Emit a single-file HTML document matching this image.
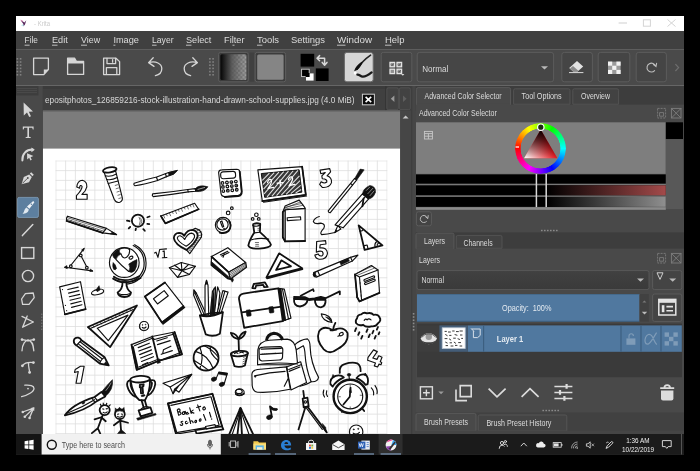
<!DOCTYPE html>
<html><head><meta charset="utf-8">
<style>
*{margin:0;padding:0}
html,body{width:700px;height:471px;background:#000;overflow:hidden}
svg{position:absolute;left:0;top:0;display:block;filter:blur(0.42px)}
text{font-family:"Liberation Sans",sans-serif;opacity:.99}
.ic{fill:none;stroke:#d6d6d6;stroke-width:1.3;stroke-linecap:round;stroke-linejoin:round}
.icf{fill:#d6d6d6;stroke:none}
.d{fill:none;stroke:#111;stroke-width:1.15;stroke-linecap:round;stroke-linejoin:round}
.dw{fill:#fff;stroke:#111;stroke-width:1.15;stroke-linecap:round;stroke-linejoin:round}
.df{fill:#111;stroke:#111;stroke-width:0.6;stroke-linejoin:round}
.dt{fill:none;stroke:#111;stroke-width:0.6;stroke-linecap:round}
.z *{vector-effect:non-scaling-stroke}
.k{stroke-width:1.8}
.h{stroke-width:0.7}
</style></head><body>
<svg width="700" height="471" viewBox="0 0 700 471">
<defs>
<pattern id="grid" x="55.4" y="160.4" width="9.74" height="9.74" patternUnits="userSpaceOnUse">
<path d="M0.5 0V9.74M0 0.5H9.74" stroke="#dcdcdc" stroke-width="0.75" fill="none"/>
</pattern>
<linearGradient id="gradbtn" x1="0" x2="1" y1="0" y2="0"><stop offset="0" stop-color="#050505"/><stop offset="0.45" stop-color="#5a5a5a"/><stop offset="1" stop-color="#8e8e8e"/></linearGradient>
<linearGradient id="redbar" x1="0" x2="1"><stop offset="0" stop-color="#000"/><stop offset="1" stop-color="#a34a4a"/></linearGradient>
<linearGradient id="graybar" x1="0" x2="1"><stop offset="0" stop-color="#000"/><stop offset="1" stop-color="#8f8f8f"/></linearGradient>
<linearGradient id="combo" x1="0" x2="0" y1="0" y2="1"><stop offset="0" stop-color="#414141"/><stop offset="1" stop-color="#3a3a3a"/></linearGradient>
<pattern id="chk" x="220.4" y="54.2" width="4.4" height="4.4" patternUnits="userSpaceOnUse"><rect width="2.2" height="2.2" fill="#fff" fill-opacity=".16"/><rect x="2.2" y="2.2" width="2.2" height="2.2" fill="#fff" fill-opacity=".16"/><rect x="2.2" width="2.2" height="2.2" fill="#000" fill-opacity=".12"/><rect y="2.2" width="2.2" height="2.2" fill="#000" fill-opacity=".12"/></pattern>
<linearGradient id="chkfade" x1="0" x2="1"><stop offset="0" stop-color="#fff" stop-opacity="0"/><stop offset="1" stop-color="#fff" stop-opacity="1"/></linearGradient><mask id="chkmask"><rect x="229" y="54.2" width="18" height="25.8" fill="url(#chkfade)"/></mask>
<clipPath id="paperclip"><rect x="42.8" y="148.6" width="357.4" height="285.4"/></clipPath>
</defs>
<!-- window base -->
<rect x="16" y="16" width="668" height="438.5" fill="#494949"/>
<!-- title bar -->
<rect x="16" y="16" width="668" height="15" fill="#fff"/>
<g id="kritaicon"><path d="M20.5 20 L24.5 22.5 L26.3 20.2 L25 24.5 L23.6 26.2 L23.2 23.8 Z" fill="#5a2a5e"/><path d="M20.3 19.6 L23 20.4 L22 22 Z" fill="#e06aa8" opacity=".6"/><path d="M21 25.5 L23.4 24 L23.6 26.4 Z" fill="#7fd6e6" opacity=".5"/></g>
<text x="34" y="26" font-size="7.5" fill="#c9c9c9" textLength="16" lengthAdjust="spacingAndGlyphs">- Krita</text>
<path d="M618.6 23H627" stroke="#cfcfcf" stroke-width="1" />
<rect x="643.4" y="19.8" width="7" height="6.4" fill="none" stroke="#d4d4d4" stroke-width="1"/>
<path d="M667.5 19.5L675.5 26.5M675.5 19.5L667.5 26.5" stroke="#d4d4d4" stroke-width="1"/>
<!-- menu bar -->
<rect x="16" y="31" width="668" height="18.3" fill="#404040"/>
<rect x="16" y="49" width="668" height="1" fill="#5d5d5d"/>
<g font-size="9.4" fill="#dedede">
<text x="24.6" y="43.2" textLength="13.4" lengthAdjust="spacingAndGlyphs">File</text>
<text x="52" y="43.2" textLength="15.7" lengthAdjust="spacingAndGlyphs">Edit</text>
<text x="81" y="43.2" textLength="19.2" lengthAdjust="spacingAndGlyphs">View</text>
<text x="113.4" y="43.2" textLength="25.6" lengthAdjust="spacingAndGlyphs">Image</text>
<text x="152" y="43.2" textLength="21.6" lengthAdjust="spacingAndGlyphs">Layer</text>
<text x="186" y="43.2" textLength="25.4" lengthAdjust="spacingAndGlyphs">Select</text>
<text x="224" y="43.2" textLength="20.5" lengthAdjust="spacingAndGlyphs">Filter</text>
<text x="257" y="43.2" textLength="22" lengthAdjust="spacingAndGlyphs">Tools</text>
<text x="291" y="43.2" textLength="34" lengthAdjust="spacingAndGlyphs">Settings</text>
<text x="337" y="43.2" textLength="35" lengthAdjust="spacingAndGlyphs">Window</text>
<text x="385" y="43.2" textLength="19.5" lengthAdjust="spacingAndGlyphs">Help</text>
</g>
<g stroke="#dedede" stroke-width="0.8">
<path d="M24.6 45.2h5M52 45.2h5.5M81 45.2h6M113.4 45.2h2M152 45.2h4.6M186 45.2h5.5M232.5 45.2h2M257 45.2h5.4M312 45.2h5M337 45.2h8.5M385 45.2h6.5"/>
</g>
<!-- toolbar -->
<rect x="16" y="50" width="668" height="35.3" fill="#4a4a4a"/>
<rect x="16" y="85" width="668" height="1" fill="#666"/>
<!-- toolbar handles -->
<g fill="#808080">
<g id="hd1"><rect x="16.6" y="58" width="1.6" height="1.6"/><rect x="19.8" y="58" width="1.6" height="1.6"/><rect x="16.6" y="61.2" width="1.6" height="1.6"/><rect x="19.8" y="61.2" width="1.6" height="1.6"/><rect x="16.6" y="64.4" width="1.6" height="1.6"/><rect x="19.8" y="64.4" width="1.6" height="1.6"/><rect x="16.6" y="67.6" width="1.6" height="1.6"/><rect x="19.8" y="67.6" width="1.6" height="1.6"/><rect x="16.6" y="70.8" width="1.6" height="1.6"/><rect x="19.8" y="70.8" width="1.6" height="1.6"/><rect x="16.6" y="74" width="1.6" height="1.6"/><rect x="19.8" y="74" width="1.6" height="1.6"/></g>
<use href="#hd1" x="192.5"/>
</g>
<!-- new doc -->
<path class="ic" d="M33.6 58.2H48.4V69.5L43.8 74.6H33.6Z"/><path class="icf" d="M48.4 69.5L43.8 74.6V69.5Z"/>
<!-- open folder -->
<path class="ic" d="M67.6 74.4V58.2H74.5L76.4 61.4H83.6V74.4Z"/><path class="icf" d="M67.6 58.2H74.5L76.4 61.4H83.6V63.6H67.6Z"/>
<!-- save -->
<path class="ic" d="M103.6 58.2H116L119.6 61.6V74.6H103.6Z"/><path class="ic" d="M107 58.4V63.6H115.6V58.4M112.6 59.6V62.2M106.4 74.4V67.6H116.8V74.4" stroke-width="1.1"/>
<!-- undo -->
<path class="ic" d="M148.6 62.6C156 60.6 161.8 63.6 161.8 68.6C161.8 72.6 158.8 75 155.4 75.6M153.2 57.8L148.6 62.6L154 66.4"/>
<!-- redo -->
<path class="ic" d="M197.4 62.6C190 60.6 184.2 63.6 184.2 68.6C184.2 72.6 187.2 75 190.6 75.6M192.8 57.8L197.4 62.6L192 66.4"/>
<!-- gradient button -->
<rect x="218.6" y="52.4" width="29.6" height="29.4" rx="2" fill="#3c3c3c" stroke="#5e5e5e" stroke-width="1"/>
<rect x="220.4" y="54.2" width="26" height="25.8" rx="1.5" fill="url(#gradbtn)"/>
<rect x="229" y="54.2" width="17.4" height="25.8" fill="url(#chk)" mask="url(#chkmask)"/>
<rect id="gapband" x="249.4" y="52.6" width="4.8" height="29" fill="#404040"/>
<!-- pattern button -->
<rect x="255.2" y="52.4" width="30.4" height="29.4" rx="2" fill="#3c3c3c" stroke="#5e5e5e" stroke-width="1"/>
<rect x="257.2" y="54.4" width="26.4" height="25.4" rx="1.5" fill="#858585"/>
<!-- fg/bg -->
<rect x="300.6" y="53.8" width="13.6" height="12.8" fill="#000"/>
<rect x="315.8" y="68.4" width="12.8" height="12.6" fill="#000"/>
<rect x="301.6" y="69.2" width="7.6" height="7.4" fill="#000" stroke="#cfcfcf" stroke-width="0.9"/>
<rect x="306" y="73.4" width="7.6" height="7.2" fill="#fff"/>
<rect x="305.6" y="73" width="4" height="4" fill="#000"/>
<path d="M317.4 58.2H324.6M319.6 55.6L317 58.2L319.6 60.8M324.6 58.2V64.6M322.2 62.4L324.6 65.2L327 62.4" fill="none" stroke="#d8d8d8" stroke-width="1.5" stroke-linejoin="round" stroke-linecap="round"/>
<!-- brush preset -->
<rect x="344.4" y="52.4" width="28.8" height="29.4" rx="2.5" fill="#d6d6d6" stroke="#6a6a6a" stroke-width="1"/>
<path d="M370.6 55.2C366 58.4 361 63 357 69.2" fill="none" stroke="#222" stroke-width="1.6" stroke-linecap="round"/>
<path d="M362 62.4C359 64.6 356 67.6 355.2 70.2C356.6 69.8 359.6 67.2 362 62.4Z" fill="#111" stroke="#111" stroke-width="1.4"/>
<circle cx="355.2" cy="73" r="1.5" fill="#fff"/><path d="M357.4 74.6C359.4 74.4 360.4 76.4 362.6 76.6C365.6 76.8 368.4 75 371.6 72.4" fill="none" stroke="#1a1a1a" stroke-width="2.3" stroke-linecap="round"/>
<!-- separator & grid btn -->
<rect x="381.2" y="52.4" width="30.6" height="29.4" rx="2" fill="#454545" stroke="#5c5c5c" stroke-width="1"/>
<g fill="#dcdcdc" fill-opacity=".5" stroke="#e4e4e4" stroke-width="1.3"><rect x="390" y="62.4" width="4.6" height="4.4"/><rect x="397" y="62.4" width="4.6" height="4.4"/><rect x="390" y="69.2" width="4.6" height="4.4"/><rect x="397" y="69.2" width="4.6" height="4.4"/></g>
<path d="M391 64.6l1 1l1.600-2M398 64.6l1 1l1.600-2M398 71.400l1 1l1.600-2" fill="none" stroke="#333" stroke-width=".7"/>
<path d="M401.200 74h3.200l-1.600 1.800z" fill="#dcdcdc"/>
<!-- Normal combobox -->
<rect x="417.2" y="52.4" width="136.4" height="29.4" rx="2.5" fill="#464646" stroke="#5c5c5c" stroke-width="1"/>
<text x="422.2" y="72" font-size="8.6" fill="#dcdcdc" textLength="26" lengthAdjust="spacingAndGlyphs">Normal</text>
<path d="M541 66.2h7l-3.5 3.4z" fill="#b9b9b9"/>
<!-- eraser btn -->
<rect x="561.8" y="52.4" width="30.6" height="29.4" rx="2.5" fill="#454545" stroke="#5c5c5c" stroke-width="1"/>
<path d="M577 61L583.2 66.6L577.4 71.8H573.4L569.2 68Z" fill="#e2e2e2"/><path d="M570 68.6L573.4 71.8H577.4L578.4 70.8L573 66Z" fill="#8a8a8a"/><path d="M569 72.6H583.4" stroke="#dcdcdc" stroke-width="1"/>
<!-- checker btn -->
<rect x="598.2" y="52.4" width="31.6" height="29.4" rx="2.5" fill="#454545" stroke="#5c5c5c" stroke-width="1"/>
<g><rect x="608" y="61.6" width="12.6" height="12.4" fill="#9a9a9a"/><g fill="#f2f2f2"><rect x="608" y="61.6" width="4.2" height="4.1"/><rect x="616.4" y="61.6" width="4.2" height="4.1"/><rect x="612.2" y="65.7" width="4.2" height="4.2"/><rect x="608" y="69.9" width="4.2" height="4.1"/><rect x="616.4" y="69.9" width="4.2" height="4.1"/></g></g>
<!-- reload btn -->
<rect x="636.2" y="52.4" width="30.2" height="29.4" rx="2.5" fill="#454545" stroke="#5c5c5c" stroke-width="1"/>
<path d="M655.6 66.2A4.4 4.4 0 1 0 654.6 70.6M653.4 64.6L656 66.6L656.6 63.4" fill="none" stroke="#bdbdbd" stroke-width="1.1" stroke-linecap="round"/>
<path d="M675.4 64.2L678.6 67.6L675.4 71" fill="none" stroke="#6e6e6e" stroke-width="1.2"/>
<!-- tab row -->
<rect x="16" y="86" width="400" height="24.6" fill="#3b3b3b"/>
<rect x="42.8" y="89" width="342.6" height="21.6" fill="#404040"/>
<rect x="385.4" y="86" width="1" height="24.6" fill="#333"/>
<text x="45" y="102.6" font-size="8.6" fill="#dadada" textLength="309.6" lengthAdjust="spacingAndGlyphs">epositphotos_126859216-stock-illustration-hand-drawn-school-supplies.jpg (4.0 MiB)</text>
<rect x="362.4" y="94.2" width="12" height="10.6" fill="#0c0c0c" stroke="#cfcfcf" stroke-width="1"/>
<path d="M365.6 96.8L371.2 102.2M371.2 96.8L365.6 102.2" stroke="#fff" stroke-width="1.6"/>
<!-- tab scroll arrows -->
<rect x="386.8" y="87.8" width="11.6" height="21.8" rx="1.5" fill="#424242" stroke="#565656" stroke-width="0.8"/>
<rect x="399.4" y="87.8" width="11" height="21.8" rx="1.5" fill="#424242" stroke="#565656" stroke-width="0.8"/>
<path d="M394.4 95.6V102L390.8 98.8Z" fill="#9a9a9a"/><path d="M403 95.6V102L406.6 98.8Z" fill="#5f5f5f"/>
<!-- canvas area -->
<rect x="42.8" y="110.6" width="357.4" height="324" fill="#7c7c7c"/>
<rect x="42.8" y="110.6" width="357.4" height="1.2" fill="#6a6a6a"/>
<rect x="42.8" y="148.6" width="357.4" height="286" fill="#fff"/>
<rect x="55.4" y="160.4" width="332" height="274" fill="url(#grid)" clip-path="url(#paperclip)"/>
<!-- scrollbar / splitter -->
<rect x="400.2" y="110.6" width="10.6" height="324" fill="#464646"/>
<rect x="410.8" y="86" width="5" height="348.6" fill="#464646"/>
<rect x="411.4" y="86" width="0.8" height="348.6" fill="#3a3a3a"/>
<path d="M402.6 118.4h6l-3-3z" fill="#c8c8c8"/>
<g fill="#8c8c8c"><rect x="412.8" y="313" width="1.6" height="1.6"/><rect x="412.8" y="316.2" width="1.6" height="1.6"/><rect x="412.8" y="319.4" width="1.6" height="1.6"/><rect x="412.8" y="322.6" width="1.6" height="1.6"/><rect x="412.8" y="325.8" width="1.6" height="1.6"/><rect x="412.8" y="329" width="1.6" height="1.6"/></g>
<g clip-path="url(#paperclip)">
<!-- digits as paths -->
<g class="z" transform="translate(50,155) scale(0.14859)"><path class="dw" stroke-width="1.4" d="M180 215Q185 172 218 170Q250 178 248 215Q240 245 215 266L250 264L250 298L178 298L178 274Q215 235 216 214Q212 202 204 206Q198 212 200 224Z"/></g>
<g class="z" transform="translate(300,155) scale(0.14859)"><path class="dw" stroke-width="1.4" d="M135 102L200 92L206 114L182 140Q215 150 212 186Q198 222 150 218L132 198L142 180Q165 196 180 182Q186 162 150 160L147 140L170 118L140 126Z"/></g>
<g class="z" transform="translate(300,215) scale(0.14859)"><path class="dw" stroke-width="1.4" d="M112 178L172 172L175 195L136 200L133 222Q180 215 185 256Q180 300 130 298Q105 294 100 270L122 262Q130 280 148 275Q162 262 150 246Q135 238 110 250Z"/></g>
<g class="z" transform="translate(50,335) scale(0.14859)"><path class="dw" stroke-width="1.4" d="M205 210L230 210L208 325L175 325L190 246L165 252L170 232Z"/></g>
<g class="z" transform="translate(300,335) scale(0.14859)"><path class="dw" stroke-width="1.4" d="M495 100L520 112L490 155L518 164L530 140L552 150L540 180L550 185L545 200L532 196L522 215L500 208L508 188L455 170L458 150Z"/></g>
<!-- Tile A origin 50,155 -->
<g class="z" transform="translate(50,155) scale(0.14859)">
<path class="dw" d="M362 112L432 298Q445 325 470 318Q492 308 486 285L442 108Z"/>
<ellipse class="dw k" cx="402" cy="100" rx="46" ry="17" transform="rotate(-10 402 100)"/>
<path class="d" d="M372 140Q405 150 447 128M383 165Q415 172 452 152M392 192L458 175"/>
<path class="dt" d="M455 200l-16 5M461 222l-16 5M467 244l-16 5M473 266l-16 5M479 288l-16 5"/>
</g>
<!-- Tile B origin 130,155 -->
<g class="z" transform="translate(130,155) scale(0.14859)">
<path class="dw" d="M28 190Q100 165 180 148L260 118L318 104L290 130L250 144L185 172Q100 198 34 207Q22 200 28 190Z"/>
<path class="df" d="M258 118L318 104L290 130L262 138Z"/>
<path class="d" d="M178 150L186 172M238 126L246 146"/>
<path class="dw" d="M152 262Q270 250 390 232L440 226L442 244L392 248Q270 268 156 280Q146 272 152 262Z"/>
<path class="df" d="M438 228Q465 196 525 214Q498 252 442 246Z"/>
<path class="d" d="M388 232L392 248"/>
<path d="M455 232L505 218" stroke="#fff" stroke-width=".6" fill="none"/>
<path class="dw" d="M208 410L435 325L462 365L238 460Z"/>
<path class="d k" d="M208 410L238 460L462 365"/>
<path class="dt" d="M225 404l8 20M245 397l5 12M265 389l8 20M285 382l5 12M305 374l8 20M325 367l5 12M345 359l8 20M365 352l5 12M385 344l8 20M405 337l5 12M422 330l8 20"/>
</g>
<!-- Tile C origin 210,155 -->
<g class="z" transform="translate(210,155) scale(0.14859)">
<path class="dw" d="M58 118Q60 100 80 100L180 96Q198 96 200 112L212 245Q212 268 190 272L100 280Q78 280 74 258Z"/>
<path class="d k" d="M200 112L214 245Q214 272 190 276L100 284"/>
<rect class="dw" x="72" y="112" width="100" height="46" rx="16" transform="rotate(-3 120 135)"/>
<g class="dw" stroke-width=".8"><circle cx="84" cy="188" r="9"/><circle cx="114" cy="185" r="9"/><circle cx="144" cy="182" r="9"/><circle cx="174" cy="179" r="9"/><circle cx="87" cy="215" r="9"/><circle cx="117" cy="212" r="9"/><circle cx="147" cy="209" r="9"/><circle cx="177" cy="206" r="9"/><circle cx="90" cy="243" r="9"/><circle cx="120" cy="240" r="9"/><circle cx="150" cy="237" r="9"/><circle cx="180" cy="234" r="9"/></g>
<g fill="#111"><circle cx="144" cy="182" r="4"/><circle cx="147" cy="209" r="4"/><circle cx="177" cy="206" r="4"/><circle cx="120" cy="240" r="4"/><circle cx="87" cy="215" r="4"/><circle cx="180" cy="234" r="4"/></g>
<!-- chalkboard -->
<path class="dw" d="M322 100L620 78L645 268L352 310Z"/>
<path class="d k" d="M352 310L645 268L620 78"/><path class="d" d="M360 318L650 276"/>
<path d="M345 125L600 100L618 250L368 285Z" fill="#383838" stroke="#111" stroke-width="1"/>
<g stroke="#fff" stroke-width="1.05" fill="none" opacity=".85"><path d="M352 170L400 122M356 200L432 118M360 230L464 115M364 262L496 112M384 282L528 109M416 278L560 106M448 274L592 104M480 270L602 140M512 265L606 172M544 260L610 204M576 256L614 232"/></g>
<g stroke="#fff" stroke-width="1.3" fill="none" stroke-linecap="round"><path d="M388 185Q392 160 410 165Q424 176 392 225L428 218"/><path d="M452 190L492 186M472 170L474 208"/><path d="M528 165Q534 142 552 148Q566 160 534 205L572 198"/></g>
<!-- bubbles -->
<circle class="dw" cx="147" cy="358" r="9"/><circle class="dw" cx="122" cy="390" r="12"/>
<circle class="dw" cx="312" cy="402" r="12"/><circle class="dw" cx="287" cy="430" r="9"/><circle class="dw" cx="328" cy="430" r="9"/>
</g>
<!-- Tile D origin 300,155 -->
<g class="z" transform="translate(300,155) scale(0.14859)">
<path class="dw" d="M190 376L368 158L382 168L204 388Q192 390 190 376Z"/>
<path class="df" d="M368 158L405 95L432 100L382 168Z"/>
<path class="d" d="M340 192L354 202"/>
<path class="dw" d="M236 470L420 262L462 296L290 490Z"/>
<path class="d" d="M265 470L440 280"/>
<path class="df" d="M420 262Q425 225 470 205Q510 210 508 250Q495 290 462 296Z"/>
<g stroke="#fff" stroke-width=".5" fill="none"><path d="M445 240L470 215M455 262L492 222M470 275L500 240"/></g>
<path class="d k" d="M428 292L420 345"/>
</g>
<!-- Tile E origin 50,215 -->
<g class="z" transform="translate(50,215) scale(0.14859)">
<path class="dw" d="M118 8L380 90L448 132L355 120L112 40Q106 22 118 8Z"/>
<path class="d k" d="M112 40L355 120"/>
<path class="d" d="M380 90L355 120"/><path class="dt" d="M116 18L372 98M114 29L362 109"/>
<path class="df" d="M420 115L448 132L405 127Z"/>
<path class="dt" d="M140 44l3-7M170 54l3-7M200 64l3-7M230 74l3-7M260 84l3-7M290 94l3-7M320 104l3-7"/>
<!-- sun -->
<circle class="dw k" cx="592" cy="38" r="41"/>
<path class="dt" d="M610 20Q628 40 612 62M600 15Q616 38 602 66"/>
<path class="d k" d="M518 38L535 42M530 90L540 80M576 102L578 92M628 95L638 106M655 60L668 62M655 15L670 10"/>
<!-- geometry triangle -->
<path class="d" d="M228 228L135 345M205 268L252 358M100 352L285 376"/>
<path class="df" d="M232 222L224 244L212 236ZM96 352L114 340L116 362ZM290 378L268 380L272 364Z"/>
<circle class="dw" cx="207" cy="272" r="9"/><circle class="dw" cx="140" cy="345" r="9"/><circle class="dw" cx="248" cy="355" r="9"/>
<!-- globe -->
<circle class="dw" cx="500" cy="320" r="100"/>
<path class="d" d="M560 205Q650 250 630 360Q600 450 500 455Q450 450 425 425"/>
<path class="d" d="M570 200Q665 250 642 365Q608 462 500 466"/>
<path class="df" d="M420 268Q440 235 470 228Q460 250 478 262Q450 275 445 300Q425 290 420 268ZM425 320Q440 330 448 360Q440 375 428 365Q418 345 425 320ZM530 330Q560 310 585 300Q590 340 570 375Q550 395 530 380Q545 355 530 330Z"/>
<path class="d" d="M470 228Q510 215 535 232Q540 262 515 285Q490 300 478 262M445 300Q480 340 530 380"/>
<ellipse class="dw" cx="545" cy="287" rx="14" ry="9" transform="rotate(-25 545 287)"/>
<path class="d k" d="M498 455L500 470"/>
</g>
</g>
<g clip-path="url(#paperclip)">
<!-- Tile F origin 130,215 -->
<g class="z" transform="translate(130,215) scale(0.14859)">
<!-- heart -->
<path class="dw" d="M380 235L402 260L480 150Q492 104 440 90L420 100Z"/>
<path class="dt" d="M390 244l20-8M400 230l22-8M410 216l24-8M420 202l26-8M430 188l28-8M440 174l30-8M450 158l30-8M456 140l28-6M456 122l26-8M450 106l20-8"/>
<path class="dw k" d="M380 235Q300 195 295 155Q298 122 330 120Q355 122 365 140Q385 100 420 100Q458 108 455 145Q440 190 380 235Z"/>
<path class="d" d="M378 210Q322 180 318 155Q322 138 338 140Q355 145 368 165Q385 125 415 122Q438 128 434 150Q420 185 378 210Z"/>
<!-- sqrt 1 -->
<path class="d" d="M165 255L175 250L188 285L200 232L245 228M222 245L230 242L232 285M218 288L248 286"/>
<!-- boat -->
<path class="dw" d="M265 355L345 320L440 345L400 400L320 420Z"/>
<path class="d" d="M265 355L350 375L440 345M345 320L350 375M320 420L350 375L400 400M300 338L350 375L395 332"/>
<!-- lying book (top part) -->
</g>
<!-- Tile G origin 210,215 -->
<g class="z" transform="translate(210,215) scale(0.14859)">
<!-- coin -->
<circle class="dw" cx="88" cy="68" r="52"/>
<path class="d k" d="M128 40Q150 75 125 108Q100 128 65 118"/>
<circle class="d" cx="84" cy="64" r="38"/>
<path class="dw" d="M70 45L80 40L92 78L84 82Z"/><circle class="df" cx="95" cy="92" r="4"/>
<!-- flask -->
<path class="dw k" d="M290 62Q312 50 338 60L336 115Q400 170 410 200Q405 222 330 226Q265 228 258 205Q265 170 298 118Z"/>
<path class="d" d="M288 70Q312 82 338 68M275 168Q330 150 395 162M300 120L334 116"/>
<path class="dt" d="M305 185h22M308 198h18M306 210h22M322 90h10M322 102h10"/>
<!-- upright book -->
<path class="dw" d="M505 -35L640 -45L640 175L505 178Z"/>
<path class="dw" d="M490 -20L505 -35L505 178L490 150Z"/>
<path class="d k" d="M505 178L640 175M490 -20L490 150L505 178"/>
<rect class="dw" x="520" y="15" width="90" height="20" transform="rotate(-4 565 25)"/>
<path class="dw" d="M490 -20L505 -60L600 -100L635 -55L640 -45L505 -35Z"/>
<path class="dt" d="M500 -45L610 -88M505 -52L618 -78M508 -40L628 -66"/>
<!-- lying book -->
<path class="dw" d="M10 280L120 220L240 320L125 385Z"/>
<path class="dw" d="M125 385L240 320L246 352L136 432Z"/>
<path class="dw" d="M10 280L125 385L136 432L118 428L8 338Z"/><path class="df" d="M8 312L122 412L136 432L118 428L8 338Z"/>
<path class="dt" d="M128 396L242 328M130 406L243 336M132 416L244 344M134 424L245 350"/>
<path class="d" d="M70 268l50-24M78 276l50-24M96 262l-8 22"/>
<path class="df" d="M136 430l14 22l8-14l-6-16z"/>
<path class="d k" d="M10 280L125 385"/>
<!-- set square -->
<path class="dw k" d="M465 258L620 358L380 420Z"/>
<path class="dw k" d="M480 305L545 345L445 370Z"/>
<path class="d k" d="M384 426L622 364"/>
</g>
<!-- Tile H origin 300,215 -->
<g class="z" transform="translate(300,215) scale(0.14859)">
<path class="d" d="M130 10Q95 20 90 45Q100 65 140 55Q175 60 160 90Q130 120 145 132Q180 130 235 118"/>
<path class="dw" d="M235 118L255 70L275 95Z"/><path class="df" d="M235 118L243 98L250 108Z"/>
<!-- right triangle -->
<path class="dw k" d="M395 70L435 235L555 205Z"/>
<path class="d" d="M428 208L452 202L458 228M402 108Q418 112 425 98M505 215Q500 192 515 180M520 212Q516 196 528 188"/>
<!-- ballpoint pen -->
<path class="dw" d="M92 388L340 285L390 270L352 310L110 418Q85 415 92 388Z"/>
<path class="df" d="M92 388Q82 404 98 418L112 412Q100 400 106 384Z"/>
<path class="df" d="M268 316L325 292L332 310L276 336Z"/>
<path class="d" d="M340 285L352 310M120 378L132 406"/>
</g>
<!-- Tile I origin 50,275 -->
<g class="z" transform="translate(50,275) scale(0.14859)">
<path class="dw" d="M65 80L205 45L240 230L100 265Z"/><path class="d k" d="M240 230L100 265"/>
<path class="d" stroke-width="1" d="M120 98L190 82M125 122L195 105M130 146L200 130M135 170L205 153M140 194L210 177M145 218L215 200"/>
<g fill="#111"><circle cx="84" cy="98" r="4"/><circle cx="104" cy="205" r="4"/><circle cx="112" cy="240" r="4"/></g>
<!-- pushpin -->
<ellipse class="dw" cx="320" cy="115" rx="42" ry="17" transform="rotate(-14 320 115)"/>
<path class="df" d="M330 72L338 100L318 112L310 100Z"/>
<!-- globe stand -->
<path class="dw k" d="M488 48Q490 95 455 118Q460 145 500 148Q542 145 545 118Q512 95 514 48Z"/>
<path class="d" d="M462 126Q500 140 540 124"/>
<path class="d k" d="M430 12Q500 60 600 8M425 25Q500 75 610 20"/>
<!-- big triangle -->
<path class="dw k" d="M255 350L585 205L405 485Z"/>
<path class="dw" d="M318 358L525 270L392 442Z"/>
<path class="d" d="M275 358L560 232"/>
<path class="dt" d="M290 340l6 12M315 329l6 12M340 318l6 12M365 307l6 12M390 296l6 12M415 285l6 12M440 274l6 12M465 263l6 12M490 252l6 12M515 241l6 12M540 230l6 12"/>
<!-- smiley -->
<circle class="dw" cx="632" cy="345" r="30"/><circle class="df" cx="622" cy="338" r="3"/><circle class="df" cx="642" cy="336" r="3"/><path class="d" d="M620 355Q632 365 645 352"/>
</g>
<!-- Tile J origin 130,275 -->
<g class="z" transform="translate(130,275) scale(0.14859)">
<path class="dw" d="M100 145L235 50L360 210L215 320Z"/>
<path class="d k" d="M215 320L360 210M100 145L235 50M100 145L215 320M222 328L366 218"/>
<path class="dw" d="M158 160L230 105L258 140L185 195Z"/>
<circle class="dw" cx="95" cy="343" r="30"/><circle class="df" cx="85" cy="336" r="3"/><circle class="df" cx="105" cy="334" r="3"/><path class="d" d="M83 353Q95 363 108 350"/>
<!-- pencil cup -->
<path class="dw" d="M430 100L445 120L515 268L485 272L428 135Z"/>
<path class="d" d="M440 128L500 270"/>
<path class="dw" d="M515 35L525 70L530 268L505 268L505 72Z"/>
<path class="dw" d="M555 110L575 80L580 265L540 268Z"/><path class="df" d="M548 180L566 90L572 260L545 266Z"/>
<path class="dw" d="M590 80L605 120L590 262L568 262Z"/>
<path class="dw" d="M625 105L660 115L612 258L585 262Z"/><path class="d" d="M638 110L598 258"/>
<path class="df" d="M430 100L446 122L434 128ZM515 35L523 62L508 62Z"/>
<path class="dw k" d="M470 272Q540 290 625 250L605 395Q560 420 510 400Z"/>
<path class="d" d="M470 272Q550 250 625 250"/>
</g>
<!-- Tile K origin 210,275 -->
<g class="z" transform="translate(210,275) scale(0.14859)">
<path class="dw" d="M460 90L500 95L545 290L490 310Z"/>
<path class="df" d="M460 92L478 92L510 304L490 310Z"/>
<path class="d" d="M488 96L528 296M474 94L506 305"/>
<path class="dw k" d="M195 160Q195 130 225 125L460 90L490 310L230 355Z"/>
<path class="d k" d="M215 252L470 215"/>
<rect class="df" x="245" y="235" width="30" height="42" rx="5" transform="rotate(-8 260 256)"/><rect class="df" x="398" y="213" width="30" height="42" rx="5" transform="rotate(-8 413 234)"/>
<path class="dw k" d="M285 88L295 60L370 50L388 80L365 82L358 66L310 72L305 90Z"/>
<!-- plant sprout top (tile O has pot) -->
</g>
<!-- Tile L origin 300,275 -->
<g class="z" transform="translate(300,275) scale(0.14859)">
<!-- glasses -->
<path class="dw k" d="M-40 160Q-45 210 0 212Q45 205 52 165Z"/>
<path class="dw k" d="M100 165Q100 215 140 218Q175 210 172 168Z"/>
<path d="M-45 150L30 152L60 165L100 160L140 150L175 160" fill="none" stroke="#111" stroke-width="2.8" stroke-linejoin="round"/>
<path class="d k" d="M5 140L88 96L92 108M165 160L268 110L268 130"/>
<!-- book -->
<path class="dw" d="M370 -4L385 150L400 178L535 120L525 -34L480 -64Z"/>
<path class="d k" d="M385 150L400 178L535 120"/>
<path class="d" d="M370 -4L400 14L415 172M400 14L525 -34"/><path class="dt" d="M378 -10L486 -58M386 2L500 -46"/><path class="d k" d="M370 -4L385 150"/>
<path class="dt" d="M405 50v10M407 78v10M409 106v10M411 134v10"/>
<rect class="dw" x="428" y="18" width="76" height="13" rx="6" transform="rotate(-22 466 24)"/><rect class="dw" x="432" y="40" width="76" height="13" rx="6" transform="rotate(-22 470 46)"/>
<!-- apple -->
<path class="dw k" d="M222 372Q160 335 128 380Q105 440 160 500Q200 540 250 500Q330 460 320 390Q290 340 222 372Z"/>
<path class="d k" d="M238 322L228 345L222 372M205 372L245 368"/>
<path class="dw" d="M143 262Q150 310 215 320Q208 268 143 262Z"/><path class="df" d="M172 282Q192 295 212 316Q208 286 172 282Z"/>
<ellipse class="dw" cx="278" cy="398" rx="14" ry="10" transform="rotate(-25 278 398)"/><path class="d" d="M255 412l10-4"/>
<!-- cloud -->
<path class="dw k" d="M385 290Q370 305 378 325Q395 345 425 335Q445 355 480 345Q510 350 525 325Q550 305 535 285Q525 262 495 268Q480 250 450 258Q430 248 412 265Q385 268 385 290Z"/>
<path class="d" d="M432 305Q442 290 452 302Q462 288 478 302"/>
<path class="d k" d="M378 358l-8 20M400 385l-8 18M420 410l-8 18M455 365l-8 18M470 400l-8 18M495 375l-8 18M510 410l-8 18M525 350l-8 18M535 385l-6 14"/>
</g>
</g>
<g clip-path="url(#paperclip)">
<!-- Tile M origin 50,335 -->
<g class="z" transform="translate(50,335) scale(0.14859)">
<!-- pencil -->
<path class="dw k" d="M160 38Q165 15 190 18Q205 22 212 35L368 150L395 205L335 192L178 70Q158 58 160 38Z"/>
<path class="d" d="M212 35Q195 50 178 70M200 44L350 160M188 58L340 178M368 150Q345 160 335 192"/>
<path class="df" d="M375 180L395 205L362 198Z"/>
<!-- open book (left page edge) handled in tile N -->
</g>
<!-- Tile N origin 130,335 -->
<g class="z" transform="translate(130,335) scale(0.14859)">
<!-- open book -->
<path class="dw" d="M10 65L150 10L300 -20L350 130L190 175L45 235Z"/>
<path class="d k" d="M10 65L45 235L190 175L350 130L300 -20"/>
<path class="d k" d="M20 80L52 222M335 125L290 -12"/>
<path class="d k" d="M150 10L190 175"/>
<path class="d" d="M30 72L150 22Q160 20 165 30M165 30L292 -5M60 215L185 165Q200 158 205 170L340 118"/>
<path class="d" d="M55 85L130 55M60 108L140 78M65 132L145 100M72 155L150 124M78 178L158 146M85 200L120 186M180 40L250 18M185 65L270 38M220 125L225 100L275 75M210 130L285 105"/>
<path class="df" d="M180 178L200 172L205 185L185 192Z"/>
<!-- basketball -->
<circle class="dw k" cx="512" cy="155" r="84"/>
<path class="d" d="M440 110Q520 130 560 225M470 82Q500 150 470 225M500 72Q560 100 595 150M430 170Q480 200 530 238M540 78Q530 120 596 175"/>
<!-- paper plane -->
<path class="dw" d="M222 325L415 265L330 385L300 365L290 395L270 350Z"/>
<path class="d" d="M415 265L270 350M415 265L300 365M290 395L330 340"/>
<path class="df" d="M415 265L385 285L395 295Z"/>
<!-- music note -->
<ellipse class="df" cx="565" cy="297" rx="18" ry="14" transform="rotate(-20 565 297)"/><ellipse class="df" cx="618" cy="332" rx="18" ry="14" transform="rotate(-20 618 332)"/>
<path class="d" d="M580 292L598 250L655 258L634 328"/><path d="M598 250L655 258L652 272L594 262Z" class="df"/>
</g>
<!-- strap origin 300,335 -->
<g class="z" transform="translate(300,335) scale(0.14859)">
<path class="dw" d="M-40 70Q0 30 50 26Q68 40 68 80Q72 190 125 285Q118 318 75 314Q40 230 34 130Q32 90 22 72L-25 100Z"/>
<path class="d" d="M75 314Q50 330 0 345"/>
</g>
<!-- Tile O origin 210,335 -->
<g class="z" transform="translate(210,335) scale(0.14859)">
<!-- plant -->
<path class="d k" d="M195 110L192 25"/>
<path class="dw k" d="M192 28Q150 20 140 -15Q180 -10 192 28ZM194 28Q230 15 240 -22Q205 -12 194 28Z"/>
<path class="dw k" d="M140 128Q195 150 255 122L235 205Q200 222 165 210Z"/>
<ellipse class="dw k" cx="198" cy="125" rx="57" ry="18" transform="rotate(-4 198 125)"/>
<path class="d" d="M165 125Q175 112 188 124M200 120Q212 110 225 120"/>
<path class="dt" d="M225 150l18-6M224 165l16-6M222 180l14-6M220 195l12-5"/>
<!-- backpack -->
<path class="dw" d="M320 200L322 100Q330 40 400 35L520 28Q570 35 580 100L590 200Z"/>
<path d="M380 38Q385 -5 430 -12Q478 -8 488 35" fill="none" stroke="#111" stroke-width="3"/>
<path class="dw" d="M330 100Q335 82 360 82L470 78Q490 80 490 100L488 150Q485 168 465 168L350 175Q332 172 332 155Z"/>
<path class="d" d="M345 95L480 90M340 130L485 122"/><path class="dt" d="M352 128h6M366 127h6M380 126h6M394 125h6M408 124h6M422 123h6M436 122h6"/>
<path class="dw" d="M515 215L610 180L650 320L545 370Z"/>
<path class="d" d="M530 232L612 200M532 245L605 215"/>
<path class="dw" d="M282 270Q280 238 320 232L515 215L540 365Q430 390 320 385Q288 380 284 340Z"/>
<path class="d" d="M300 275Q400 250 505 245M515 215L528 290L500 345"/><circle class="df" cx="304" cy="280" r="5"/>
<path class="d" d="M320 200Q400 185 520 190L590 195"/>
<!-- eraser -->
<ellipse class="dw" cx="200" cy="385" rx="30" ry="22"/><ellipse class="d" cx="195" cy="380" rx="22" ry="15"/><path class="d k" d="M175 398Q200 415 228 395"/>
</g>
<!-- Tile P/T alarm clock origin 300,370 -->
<g class="z" transform="translate(300,370) scale(0.14859)">
<path class="d k" d="M268 20Q262 -30 300 -40Q350 -55 385 -45Q410 -30 408 8"/>
<path class="dw k" d="M205 95Q200 55 240 40Q275 30 295 50Q240 75 220 112Z"/>
<path class="dw k" d="M380 55Q400 25 440 30Q465 50 455 95L440 100Q420 70 380 55Z"/>
<path class="df" d="M222 30L235 45L215 50ZM440 20L448 38L430 35Z"/>
<ellipse class="df" cx="330" cy="32" rx="12" ry="9"/><path class="d" d="M330 40L332 62"/>
<path class="d k" d="M282 282L296 262M432 276L418 258"/>
<circle cx="338" cy="178" r="112" fill="#fff" stroke="#111" stroke-width="2.4"/>
<circle class="d" cx="338" cy="178" r="84"/>
<path class="d k" d="M335 180L340 118M335 180L292 232"/><path class="df" d="M333 150L340 118L347 152Z"/>
<path class="dt" d="M338 100v10M338 248v10M262 180h10M405 170h10"/>
<path class="d" d="M160 135Q150 160 165 182M180 140Q172 160 185 178M480 120Q500 140 495 168M505 105Q525 135 518 160"/>
<!-- compass -->
<path class="d k" d="M22 140L28 188"/>
<path class="dw k" d="M18 192L50 186L58 245L25 252Z"/><circle class="dw" cx="36" cy="215" r="8"/>
<path class="d k" d="M50 246L180 420M36 250L-10 400"/>
<path class="d" d="M40 252L150 400"/>
<path class="df" d="M150 360L172 385L180 422L162 398Z"/>
<!-- smiley -->
<circle class="dw" cx="378" cy="415" r="45"/><circle class="df" cx="362" cy="400" r="4"/><circle class="df" cx="392" cy="396" r="4"/><path class="d" d="M358 425Q378 440 400 420"/>
</g>
<!-- Tile Q origin 50,370 -->
<g class="z" transform="translate(50,370) scale(0.14859)">
<!-- brush -->
<path class="dw k" d="M100 305Q150 230 300 182L346 148L372 178L318 208Q230 278 100 305Z"/>
<path class="df" d="M346 148Q385 100 420 65Q430 130 372 178Z"/>
<path class="d" d="M300 182L318 205M282 190L300 215M120 290Q220 250 300 200"/>
<ellipse class="df" cx="225" cy="222" rx="10" ry="6" transform="rotate(-30 225 222)"/>
<path d="M375 140Q400 110 412 85" stroke="#fff" stroke-width=".5" fill="none"/>
<!-- stick figures -->
<circle class="dw k" cx="368" cy="270" r="34"/>
<path class="d" d="M345 242l-6-12M360 236l-2-14M378 236l4-12M395 245l10-10M355 262l8 2M378 262l8-2M358 285Q370 295 385 282"/>
<path class="d k" d="M355 304L322 392L282 425M322 392L338 428M300 332L345 318L375 345"/>
<circle class="dw k" cx="470" cy="297" r="33"/>
<path class="df" d="M438 285L440 255L455 272L468 250L480 270L498 252L502 285Q470 265 438 285Z"/>
<path class="d" d="M455 298l8-2M480 296l8 2M455 312Q470 325 488 310"/>
<path class="d k" d="M472 330L478 405M430 372L472 340L525 355"/>
<path class="df" d="M478 400L455 428L510 428Z"/>
</g>
<!-- Tile R origin 130,370 -->
<g class="z" transform="translate(130,370) scale(0.14859)">
<!-- trophy -->
<path class="dw k" d="M3 70Q-25 70 -18 110Q-5 160 35 180L45 165Q15 150 5 105Z"/>
<path class="dw k" d="M135 70Q172 60 170 95Q160 150 125 168L118 152Q145 130 148 88Z"/>
<path class="dw k" d="M3 68Q20 170 62 202L100 205Q135 150 135 66Z"/>
<ellipse class="dw k" cx="68" cy="62" rx="66" ry="22" transform="rotate(-3 68 62)"/>
<path class="dw k" d="M66 100L92 96L90 110L84 112L88 155L74 157L72 115L66 116Z"/><ellipse class="df" cx="88" cy="172" rx="14" ry="6" transform="rotate(-10 88 172)"/>
<path class="d k" d="M78 205L92 252M100 205L112 248"/>
<path class="dw k" d="M58 272L138 252L150 288L72 312Z"/><path class="d" d="M75 262Q100 240 128 250"/>
<path class="df" d="M45 325L172 292L176 302L52 338Z"/>
<!-- whiteboard -->
<path class="dw" d="M255 225L555 160L620 380L310 432Z"/>
<path class="d k" d="M255 225L555 160L620 380M255 225L312 440"/>
<path class="d" d="M275 238L545 180L600 372L322 420M262 232L318 432"/>
<path class="dw k" d="M440 405L620 380L628 400L448 428Z"/>
<path class="dw" d="M508 380L572 368L578 382L514 396Z"/>
<g class="d" stroke-width="1.1"><path d="M318 270L328 305Q350 298 340 285Q335 278 325 285Q345 272 332 262Q325 260 318 270M352 295Q352 280 365 280Q372 290 365 298Q355 302 352 295M372 278L378 298M388 285Q378 285 382 295Q388 300 395 292M402 255L412 292M425 270L408 282L430 290M455 235L470 275M448 252L475 245M490 262Q490 248 502 248Q512 256 505 266Q495 272 490 262"/>
<path d="M355 345Q340 345 345 355Q360 360 352 372Q342 375 338 368M382 345Q370 345 374 358Q382 365 390 355M398 320L408 360M408 345Q420 335 425 355M440 340Q432 350 440 355Q450 352 448 342Q444 336 440 340M470 330Q462 340 470 346Q480 342 478 332Q474 326 470 330M495 300L510 338M535 285L545 318"/></g><circle class="df" cx="550" cy="330" r="3"/>
</g>
<!-- Tile S origin 210,370 -->
<g class="z" transform="translate(210,370) scale(0.14859)">
<path class="d k" d="M205 255L130 432M205 255L290 432M205 255L185 432M205 255L215 432"/>
<path class="d" d="M205 270L150 432M205 270L262 432"/>
<path class="df" d="M195 265L205 250L216 265Z"/>
<ellipse class="df" cx="400" cy="318" rx="20" ry="15" transform="rotate(-20 400 318)"/><path class="d k" d="M416 312L404 245Q425 270 450 265"/><path class="df" d="M404 245Q425 262 452 260L448 272Q425 275 408 262Z"/>
</g>
</g>
<!-- toolbox -->
<rect x="16" y="86" width="26.8" height="348" fill="#494949"/>
<rect x="16" y="86" width="22.4" height="9.4" fill="#3d3d3d"/>
<path d="M17 88.6h20M17 90.6h20M17 92.6h20" stroke="#4e4e4e" stroke-width="0.8"/>
<g fill="#777"><rect x="41.2" y="313.6" width="1.2" height="1.4"/><rect x="41.2" y="316.6" width="1.2" height="1.4"/><rect x="41.2" y="319.6" width="1.2" height="1.4"/><rect x="41.2" y="322.6" width="1.2" height="1.4"/><rect x="41.2" y="325.6" width="1.2" height="1.4"/><rect x="41.2" y="328.6" width="1.2" height="1.4"/></g>
<!-- arrow -->
<path class="icf" d="M23.6 102.6L33 111.4L28.8 111.8L31 116.2L29.2 117L27 112.6L23.8 115.4Z"/>
<!-- T -->
<path d="M22.8 126.6H33.6V129.6H32.8L32.2 127.8H29V136.8L30.8 137.2V138H25.6V137.2L27.4 136.8V127.8H24.2L23.6 129.6H22.8Z" class="icf"/>
<!-- curve edit -->
<path d="M22.4 160.4C22 154 26 149.6 32.6 149.6" fill="none" stroke="#d6d6d6" stroke-width="2" stroke-linecap="round"/><path class="icf" d="M31.4 147.4L34.8 149.8L31.4 152.2Z"/><path class="icf" d="M27 153.2L33.4 156L30.6 157.2L31.8 159.8L30.4 160.4L29.2 157.8L27.2 159.6Z"/>
<!-- pen nib -->
<path class="icf" d="M31.2 172.2L33.8 174.8L32.4 176.2L29.8 173.6ZM29.2 174.4L31.8 177L29 182.2L21.6 184.2L23.8 177Z"/><path d="M22.4 183.4L27.4 178.4" stroke="#494949" stroke-width="0.9"/><circle cx="27.8" cy="178" r="0.9" fill="#494949"/>
<!-- active brush -->
<rect x="17.6" y="197.4" width="20.8" height="20" rx="1.5" fill="#5d7f9f" stroke="#7b98b3" stroke-width="0.9"/>
<path d="M33.2 201L34.4 202.2L29.4 208.8L27 206.6Z" fill="#eef2f6"/><path d="M26.4 207.4L28.8 209.6C28.4 212.6 25.6 213.8 22.4 213.8C24.4 212.4 24 209 26.4 207.4Z" fill="#dfe8f0"/><circle cx="31.4" cy="204.2" r="0.8" fill="#5d7f9f"/>
<!-- line -->
<path d="M22.4 235.6L32.8 224.6" stroke="#d6d6d6" stroke-width="1.5" stroke-linecap="round"/>
<!-- rect -->
<rect x="21.6" y="247.6" width="12.2" height="10.8" fill="none" stroke="#d6d6d6" stroke-width="1.4"/>
<!-- circle -->
<circle cx="28" cy="276" r="5.6" fill="none" stroke="#d6d6d6" stroke-width="1.4"/>
<!-- polygon -->
<path class="ic" d="M25.4 293.6L33.2 293L34.2 297.6L29 304.4H22.6L21.6 299Z"/>
<!-- polyline -->
<path class="ic" d="M22 316.4L33.4 322L22.6 327.2L27.2 316"/>
<!-- bezier -->
<path class="ic" d="M22 350.8C22.4 343.6 25.4 340.4 28 340.4C30.6 340.4 33.4 343.6 33.8 350.8" stroke-width="1.5"/><path d="M22 339.6L28 340.6L33.8 339.6" class="ic" stroke-width="0.9"/><circle cx="22" cy="339.6" r="1.3" class="icf"/><circle cx="33.8" cy="339.6" r="1.3" class="icf"/><circle cx="28" cy="340.4" r="1.1" class="icf"/>
<!-- freehand path -->
<path class="ic" d="M22.4 365.6C24.6 362.8 29.8 362.2 33.4 362.6M28.6 363.4C28 366.4 29.6 369 29.6 372.6" stroke-width="1.5"/><circle cx="22.4" cy="365.8" r="1.4" class="icf"/><circle cx="33.4" cy="362.6" r="1.4" class="icf"/><circle cx="29.6" cy="372.4" r="1.4" class="icf"/>
<!-- dynamic brush -->
<path class="ic" d="M24.8 385.2C30 384.6 34 386 34 388.4C34 391.6 27.6 395.6 21.6 396.6" stroke-width="1.5"/><circle cx="28" cy="388.6" r="0.9" class="icf"/>
<!-- multibrush -->
<path class="ic" d="M33.6 408.2L25 416.6M33.6 408.2L29.4 418M33.6 408.2L22.6 412" stroke-width="1.4"/><circle cx="24.8" cy="416.8" r="1.3" class="icf"/><circle cx="29.6" cy="418" r="1.3" class="icf"/><circle cx="22.8" cy="412" r="1.3" class="icf"/><path class="icf" d="M34.4 407.2L34.2 411.2L30.8 408Z"/>
<!-- right panel -->
<rect x="415.8" y="86" width="268.2" height="348.6" fill="#494949"/>
<!-- docker tab row -->
<rect x="415.8" y="86" width="268.2" height="18.6" fill="#3d3d3d"/>
<path d="M416.4 104.6V89.4Q416.4 87.6 418.2 87.6H508.8Q510.6 87.6 510.6 89.4V104.6Z" fill="#494949" stroke="#5e5e5e" stroke-width="0.8"/>
<rect x="416.9" y="103.8" width="93.3" height="1.6" fill="#494949"/>
<path d="M513.6 104.2V90.4Q513.6 88.8 515.2 88.8H568.4Q570 88.8 570 90.4V104.2Z" fill="#424242" stroke="#585858" stroke-width="0.8"/>
<path d="M572.8 104.2V90.4Q572.8 88.8 574.4 88.8H617Q618.6 88.8 618.6 90.4V104.2Z" fill="#424242" stroke="#585858" stroke-width="0.8"/>
<g font-size="8.2" fill="#dedede">
<text x="424.6" y="98.8" textLength="77" lengthAdjust="spacingAndGlyphs">Advanced Color Selector</text>
<text x="521.6" y="99.4" textLength="40" lengthAdjust="spacingAndGlyphs">Tool Options</text>
<text x="581" y="99.4" textLength="29" lengthAdjust="spacingAndGlyphs">Overview</text>
<text x="419" y="116" textLength="77.8" lengthAdjust="spacingAndGlyphs">Advanced Color Selector</text>
</g>
<!-- docker float/close icons -->
<g id="dkic" fill="none" stroke="#7d7d7d" stroke-width="0.9"><rect x="657.6" y="108.4" width="8" height="9.6" stroke-dasharray="2 1"/><path d="M659.6 112.6h4v3.6h-4z"/><rect x="671.4" y="108.4" width="9.6" height="9.6"/><path d="M671.4 108.4l9.6 9.6M681 108.4l-9.6 9.6"/></g>
<!-- color selector -->
<rect x="416" y="122.3" width="249.8" height="51.6" fill="#7e7e7e"/>
<rect x="665.8" y="122.3" width="17.2" height="16.8" fill="#000"/>
<rect x="665.8" y="139.1" width="17.2" height="70" fill="#585858"/>
<g stroke="#c8c8c8" stroke-width="0.9" fill="none"><rect x="424.4" y="131.4" width="8" height="7.6"/><path d="M424.4 133.6h8M424.4 136.2h8M428.4 133.6v5.4"/></g>
<foreignObject x="515.2" y="123.4" width="51" height="51"><div style="width:51px;height:51px;border-radius:50%;background:conic-gradient(from 270deg,#ff0000,#ff8000 8%,#ffff00 16.6%,#00ff00 33.3%,#00ffff 50%,#0000ff 66.6%,#ff00ff 83.3%,#ff0000);-webkit-mask:radial-gradient(circle,transparent 19.6px,#000 20.2px);mask:radial-gradient(circle,transparent 19.6px,#000 20.2px)"></div></foreignObject>
<linearGradient id="triw" gradientUnits="userSpaceOnUse" x1="524.4" y1="158" x2="549.4" y2="143.6"><stop offset="0" stop-color="#fff"/><stop offset="1" stop-color="#fff" stop-opacity="0"/></linearGradient>
<linearGradient id="trik" gradientUnits="userSpaceOnUse" x1="540.7" y1="129.6" x2="540.7" y2="158"><stop offset="0" stop-color="#000"/><stop offset="1" stop-color="#000" stop-opacity="0"/></linearGradient>
<path d="M540.7 129.6L557.4 158.2H524Z" fill="#e8121a"/>
<path d="M540.7 129.6L557.4 158.2H524Z" fill="url(#triw)"/>
<path d="M540.7 129.6L557.4 158.2H524Z" fill="url(#trik)"/>
<circle cx="540.8" cy="127.2" r="3.2" fill="#1a2a10" stroke="#fff" stroke-width="1.2"/>
<path d="M515.6 147H519" stroke="#fff" stroke-width="1.2"/>
<!-- bars -->
<rect x="416" y="173.9" width="249.8" height="33.2" fill="#787878"/>
<rect x="416" y="174.3" width="249.8" height="9.4" fill="#000"/>
<rect x="416" y="185.3" width="249.8" height="10" fill="#000"/>
<rect x="547" y="185.3" width="118.8" height="10" fill="url(#redbar)"/>
<rect x="416" y="196.9" width="249.8" height="10" fill="#000"/>
<rect x="547" y="196.9" width="118.8" height="10" fill="url(#graybar)"/>
<path d="M536.4 174V207M546.2 174V207" stroke="#d8d8d8" stroke-width="1.5"/>
<rect x="416" y="207.2" width="249.8" height="2.6" fill="#8a8a8a"/>
<!-- reload small btn -->
<rect x="416.4" y="211.8" width="15" height="14" rx="2" fill="#444" stroke="#5e5e5e" stroke-width="0.9"/>
<path d="M427.4 218.2A3.6 3.6 0 1 0 426.4 221.6M425.4 216.6L427.8 218.6L428.2 215.6" fill="none" stroke="#b5b5b5" stroke-width="1" stroke-linecap="round"/>
<g fill="#8a8a8a" id="dots1"><rect x="541" y="229.8" width="1.6" height="1.4"/><rect x="544" y="229.8" width="1.6" height="1.4"/><rect x="547" y="229.8" width="1.6" height="1.4"/><rect x="550" y="229.8" width="1.6" height="1.4"/><rect x="553" y="229.8" width="1.6" height="1.4"/><rect x="556" y="229.8" width="1.6" height="1.4"/></g>
<!-- Layers tabs -->
<rect x="415.8" y="232.4" width="268.2" height="16.2" fill="#3d3d3d"/>
<path d="M416 248.6V234.8Q416 233.2 417.6 233.2H452.4Q454 233.2 454 234.8V248.6Z" fill="#494949" stroke="#5e5e5e" stroke-width="0.8"/>
<rect x="416.5" y="247.8" width="37" height="1.6" fill="#494949"/>
<path d="M456.2 248.2V237Q456.2 235.4 457.8 235.4H500.4Q502 235.4 502 237V248.2Z" fill="#424242" stroke="#585858" stroke-width="0.8"/>
<g font-size="8.2" fill="#dedede">
<text x="424" y="244.4" textLength="21" lengthAdjust="spacingAndGlyphs">Layers</text>
<text x="463.6" y="245.8" textLength="29" lengthAdjust="spacingAndGlyphs">Channels</text>
<text x="419" y="262.6" textLength="21" lengthAdjust="spacingAndGlyphs">Layers</text>
</g>
<use href="#dkic" y="145"/>
<!-- Normal combo -->
<rect x="417" y="270.6" width="232" height="19" rx="2" fill="url(#combo)" stroke="#5a5a5a" stroke-width="0.9"/>
<text x="421.4" y="283" font-size="8.4" fill="#dcdcdc" textLength="22.6" lengthAdjust="spacingAndGlyphs">Normal</text>
<path d="M637 278.4h7l-3.5 3.4z" fill="#b9b9b9"/>
<rect x="652.6" y="270.6" width="29.2" height="19" rx="2" fill="#444" stroke="#5c5c5c" stroke-width="0.9"/>
<path d="M657 272.8h6l-3 6.6z" fill="none" stroke="#cfcfcf" stroke-width="1"/><path d="M669.2 278.4h7l-3.5 3.4z" fill="#b9b9b9"/>
<!-- Opacity -->
<rect x="417" y="294" width="222.2" height="27.6" fill="#50789f"/>
<rect x="417" y="294" width="222.2" height="1" fill="#456a8c"/><rect x="417" y="320.8" width="222.2" height="1" fill="#3c5d7c"/>
<text x="502" y="311" font-size="8.4" fill="#e6ecf2" textLength="49.4" lengthAdjust="spacingAndGlyphs" xml:space="preserve">Opacity:  100%</text>
<rect x="640" y="294" width="8.8" height="27.6" fill="#414141"/>
<path d="M642.4 302.6h4l-2-2z" fill="#7a7a7a"/><path d="M641.8 311.8h5.4l-2.7 2.8z" fill="#bcbcbc"/>
<rect x="652.6" y="294" width="29.2" height="27.4" rx="2" fill="#444" stroke="#5c5c5c" stroke-width="0.9"/>
<rect x="658.8" y="299.4" width="17" height="15.6" fill="none" stroke="#e4e4e4" stroke-width="1.5"/><rect x="658.8" y="299.4" width="17" height="3.4" fill="#e4e4e4"/><rect x="661.8" y="305.2" width="2.6" height="7" fill="#e4e4e4"/><path d="M666.4 306.6h6.6M666.4 310.8h6.6" stroke="#e4e4e4" stroke-width="1.6"/>
<!-- layer list -->
<rect x="417" y="323.6" width="265" height="53.6" fill="#3a3a3a"/>
<rect x="467.6" y="325.4" width="214.2" height="26.4" fill="#50789f"/>
<rect x="417" y="325.4" width="22.4" height="26.4" fill="#3d3d3d"/>
<rect x="439.4" y="325.4" width="28.2" height="26.4" fill="#445d78"/>
<path d="M483.6 325.4v26.4M621 325.4v26.4M641 325.4v26.4M661 325.4v26.4" stroke="#3c5f80" stroke-width="1.2"/>
<!-- eye -->
<path d="M420.6 338.6C424 331.6 433.6 331.6 437 338.6C433.6 346 424 346 420.6 338.6Z" fill="#e4e4e4"/><path d="M421.6 340.4C425 345.6 432.6 345.6 436 340.4C432.6 343 425 343 421.6 340.4Z" fill="#3d3d3d"/><circle cx="428.8" cy="336.8" r="3.2" fill="#9a9a9a"/><path d="M422 337.4C425 332.6 432.6 332.6 435.6 337.4" stroke="#3d3d3d" stroke-width="0.8" fill="none"/>
<!-- thumbnail -->
<rect x="442.2" y="327.8" width="23" height="20.8" fill="#fff" stroke="#b8c4d0" stroke-width="0.8"/>
<g stroke="#222" stroke-width="0.9" fill="none" stroke-linecap="round"><path d="M445 331.4h1.4M448.4 332h2M452.6 331h1.6M456.4 331.6h2M460 331h2.4M445.6 334.6l1.6 1M449.6 335.4h1.4M455 334.6l2 0.6M460.4 335h1.6M445 338.6h2M449.4 339l1.4 1M453.6 338.2h1.8M458 338.8l1.6 0.6M461.6 338.4h1M445.6 342.2l1.6 0.8M450 342.8h1.6M454.2 342.2l1.4 1M458.6 342.6h2M446 345.6h1.6M451 346h2M455.4 345.4h1.6M460 346h1.8"/></g>
<!-- small layer icon -->
<path d="M471.6 329H480.2V335.4L477.6 337.6H473.4V331M471 328.4L474 331.4" fill="none" stroke="#d5dee8" stroke-width="1"/>
<text x="496.8" y="342" font-size="8.4" font-weight="bold" fill="#e6ecf2" textLength="26.4" lengthAdjust="spacingAndGlyphs">Layer 1</text>
<!-- lock / alpha / checker cell icons -->
<g fill="#7f9cb8"><rect x="626.4" y="338.4" width="9" height="6.4"/><path d="M629 338.4v-2.4a2.2 2.2 0 0 1 4.4 0" fill="none" stroke="#7f9cb8" stroke-width="1.1"/></g>
<path d="M656.6 332.6C652.6 338.6 650.4 344.2 647.4 344.2C645 344.2 644.4 340.6 645.6 337.4C646.8 334.4 649.6 333.2 651.6 335.6C653.4 337.8 654.4 342.4 656.8 344.6" fill="none" stroke="#7f9cb8" stroke-width="1.2"/>
<g fill="#7f9cb8"><rect x="664.6" y="332.4" width="4.4" height="4.4"/><rect x="673.4" y="332.4" width="4.4" height="4.4"/><rect x="669" y="336.8" width="4.4" height="4.4"/><rect x="664.6" y="341.2" width="4.4" height="4.4"/><rect x="673.4" y="341.2" width="4.4" height="4.4"/></g>
<!-- bottom toolbar -->
<rect x="420.4" y="386.8" width="12" height="12" fill="none" stroke="#dcdcdc" stroke-width="1.4"/><path d="M426.4 389.4v6.8M423 392.8h6.8" stroke="#dcdcdc" stroke-width="1.4"/>
<path d="M438.4 391.4h5.4l-2.7 2.8z" fill="#9a9a9a"/>
<path d="M460.2 385.6H471.2V396.6H460.2Z" fill="none" stroke="#dcdcdc" stroke-width="1.6"/><path d="M456 389.6V400.6H467" fill="none" stroke="#dcdcdc" stroke-width="1.6"/>
<path d="M488.6 388.6L497 396.8L505.6 388.6" fill="none" stroke="#dcdcdc" stroke-width="1.7"/>
<path d="M521.6 396.8L530 388.6L538.6 396.8" fill="none" stroke="#dcdcdc" stroke-width="1.7"/>
<g stroke="#dcdcdc" stroke-width="1.5"><path d="M554.4 386.4h18M554.4 392.4h18M554.4 398.4h18"/><path d="M566.6 384v4.8M560 390v4.8M564.4 396v4.8" stroke-width="2.2"/></g>
<path d="M660.2 388.2h14M664.4 387.8q0-2.6 2.8-2.6q2.8 0 2.8 2.6" fill="none" stroke="#dcdcdc" stroke-width="1.8"/><path d="M661 390.4H673.4V398.6Q673.4 400.6 671.4 400.6H663Q661 400.6 661 398.6Z" fill="#dcdcdc"/>
<use href="#dots1" x="1.4" y="180"/>
<!-- Brush presets tabs -->
<rect x="415.8" y="412.4" width="268.2" height="21.6" fill="#414141"/>
<path d="M416 431V415Q416 413.4 417.6 413.4H474.4Q476 413.4 476 415V431Z" fill="#494949" stroke="#5e5e5e" stroke-width="0.8"/>
<path d="M478.2 431V416.6Q478.2 415 479.8 415H565.2Q566.8 415 566.8 416.6V431Z" fill="#444" stroke="#5a5a5a" stroke-width="0.8"/>
<rect x="415.8" y="430.6" width="268.2" height="3.6" fill="#454545"/>
<g font-size="8.2" fill="#dedede">
<text x="424" y="424.8" textLength="44" lengthAdjust="spacingAndGlyphs">Brush Presets</text>
<text x="486.4" y="426" textLength="65" lengthAdjust="spacingAndGlyphs">Brush Preset History</text>
</g>
<!-- taskbar -->
<rect x="16" y="434" width="668" height="20.5" fill="#1b1b1b"/>
<rect x="16" y="434" width="25.6" height="20.5" fill="#141414"/>
<g fill="#fff"><path d="M24.6 441.2L28.4 440.6V444.4H24.6Z"/><path d="M29.2 440.5L33.6 439.8V444.4H29.2Z"/><path d="M24.6 445.2H28.4V449L24.6 448.4Z"/><path d="M29.2 445.2H33.6V449.8L29.2 449.1Z"/></g>
<rect x="41.6" y="434" width="179.2" height="20.5" fill="#f1f1f1"/>
<circle cx="51.8" cy="444.8" r="4.5" fill="none" stroke="#111" stroke-width="1.4"/>
<text x="61.8" y="448" font-size="8.6" fill="#4a4a4a" textLength="63.2" lengthAdjust="spacingAndGlyphs">Type here to search</text>
<g fill="none" stroke="#555" stroke-width="0.9"><rect x="208.6" y="440.2" width="2.8" height="5.6" rx="1.4" fill="#666"/><path d="M207.4 444.2q0 3.2 2.6 3.2q2.6 0 2.6-3.2M210 447.4v2"/></g>
<!-- task view -->
<g fill="none" stroke="#c9c9c9" stroke-width="0.9"><rect x="230.6" y="441" width="5" height="6.4"/><path d="M229.2 442v4.4M237 442v4.4M238 441v6.6"/></g>
<!-- explorer -->
<path d="M253.4 441.2h4.6l1 1.2h7v7.2h-12.6z" fill="#f2c94c"/><rect x="253.4" y="443.6" width="12.6" height="6" fill="#f7dd7a"/><rect x="255.6" y="445.4" width="8.2" height="4.2" fill="#5bb4e8"/><rect x="257" y="447.2" width="5.4" height="2.4" fill="#f7f2d4"/>
<!-- edge -->
<path d="M281 445.4C281 441.6 284 440 286.2 440C289.4 440 291.2 442.4 291.2 445.6H284.4C284.6 447.6 286.4 448.4 288 448.4C289.2 448.4 290.2 448 290.8 447.6V449.4C290 449.8 288.8 450.2 287.2 450.2C283.4 450.2 281 448.4 281 445.4ZM284.4 444h3.8C288.2 442.8 287.4 442 286.2 442C285.2 442 284.6 442.8 284.4 444Z" fill="#2a7fd4"/>
<!-- store -->
<path d="M306 443h10.2v7H306z" fill="#f4f4f4"/><path d="M308.6 443v-1.2q0-1.6 2.5-1.6q2.5 0 2.5 1.6V443" fill="none" stroke="#f4f4f4" stroke-width="0.9"/><rect x="309" y="444.6" width="1.9" height="1.9" fill="#e74c3c"/><rect x="311.3" y="444.6" width="1.9" height="1.9" fill="#7cb342"/><rect x="309" y="446.9" width="1.9" height="1.9" fill="#2a7fd4"/><rect x="311.3" y="446.9" width="1.9" height="1.9" fill="#f2c94c"/>
<!-- mail -->
<path d="M332.2 444.2L338.4 440.4L344.6 444.2V450H332.2Z" fill="#f6f6f6"/><path d="M332.6 444.6L338.4 447.8L344.2 444.6" fill="none" stroke="#1b1b1b" stroke-width="0.8"/>
<!-- word -->
<rect x="361.4" y="440.6" width="8.4" height="9" fill="#e9eef7"/><rect x="358" y="441.6" width="7.4" height="7" fill="#2b5fb4"/><path d="M359.2 443.4l1 3.4l1.1-3.4l1.1 3.4l1-3.4" fill="none" stroke="#fff" stroke-width="0.8"/><path d="M366.6 442.6h2.2M366.6 444.6h2.2M366.6 446.6h2.2" stroke="#2b5fb4" stroke-width="0.7"/>
<!-- krita -->
<rect x="378.6" y="434" width="24" height="20.5" fill="#2e2e2e"/>
<circle cx="391" cy="445" r="5.4" fill="#f3f3f3"/><path d="M386.4 442.4A5.4 5.4 0 0 1 393 440Z" fill="#e84393"/><path d="M393 440A5.4 5.4 0 0 1 396.4 445L391.4 445Z" fill="#3fa9f5"/><path d="M386 446.4A5.4 5.4 0 0 0 391 450.4L391 446Z" fill="#8e44ad"/><path d="M388.4 449L394.6 441.6L395.8 442.6L390.6 449.6Z" fill="#333"/>
<g stroke="#8fb0d6" stroke-width="1"><path d="M248.6 454h22M275 454h21M354 454h20M380.6 454h20.4"/></g>
<!-- tray -->
<g fill="none" stroke="#e6e6e6" stroke-width="0.9" stroke-linecap="round"><circle cx="502" cy="443" r="1.6"/><path d="M499.2 448.4q0-3.2 2.8-3.2q1.6 0 2.2 1"/><circle cx="505.4" cy="441.6" r="1.1"/><path d="M504 444.6q1.400-1 2.600 0q0.800 0.800 0.800 1.800"/></g>
<path d="M520.8 446.2L523.8 443L526.8 446.2" fill="none" stroke="#e6e6e6" stroke-width="0.9"/>
<path d="M537.6 447.4h6.200a1.800 1.800 0 0 0 0-3.600a2.600 2.600 0 0 0-5-.6a2.100 2.100 0 0 0-1.200 4.200z" fill="#ededed"/>
<rect x="553.2" y="442.6" width="8" height="4.600" fill="none" stroke="#e6e6e6" stroke-width="0.8"/><rect x="554" y="443.400" width="4.600" height="3" fill="#e6e6e6"/><rect x="561.4" y="444" width="1" height="1.800" fill="#e6e6e6"/>
<g fill="none" stroke="#b8b8b8" stroke-width="0.8"><path d="M571.6 448.4a6 6 0 0 1 6-6.400M573.400 448.400a4.200 4.200 0 0 1 4.200-4.400M575.200 448.400a2.400 2.400 0 0 1 2.400-2.400"/></g><circle cx="577.2" cy="448" r="0.8" fill="#d0d0d0"/>
<path d="M586.4 443.800h1.600l2.200-2v6.400l-2.200-2h-1.600z" fill="none" stroke="#e6e6e6" stroke-width="0.8"/><path d="M591.600 443.600l2.400 2.600M594 443.600l-2.400 2.600" stroke="#cfcfcf" stroke-width="0.7"/>
<path d="M606 448.400l1.200-2.600l4-4a1 1 0 0 1 1.400 1.400l-4 4z" fill="none" stroke="#e6e6e6" stroke-width="0.9"/><path d="M608.600 442.400q-1.600-.8-2.400.6" fill="none" stroke="#e6e6e6" stroke-width="0.8"/>
<g font-size="7.200" fill="#f2f2f2"><text x="626.200" y="442.800" textLength="23.400" lengthAdjust="spacingAndGlyphs">1:36 AM</text><text x="622" y="452.200" textLength="32.200" lengthAdjust="spacingAndGlyphs">10/22/2019</text></g>
<path d="M662.400 440.600h8.800v6h-3l-1.400 1.800l-1.400-1.800h-3z" fill="none" stroke="#e6e6e6" stroke-width="0.9"/>
<path d="M681.600 434v20.500" stroke="#6a6a6a" stroke-width="0.8"/>
</svg>
</body></html>
